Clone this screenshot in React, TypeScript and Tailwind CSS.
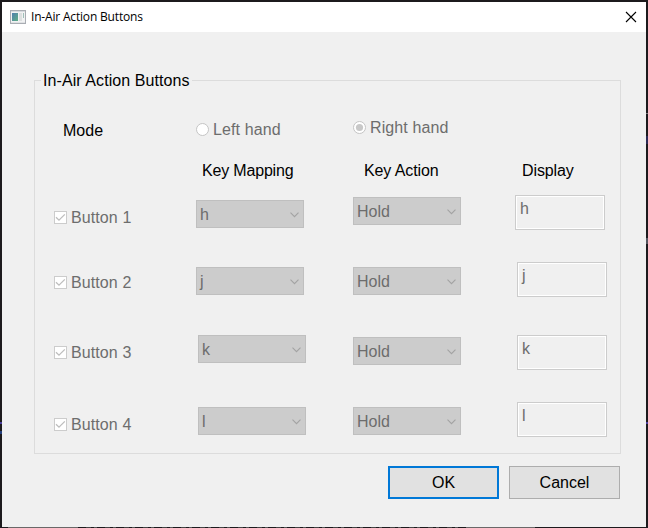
import React from "react";

type Row = {
  label: string;
  keyName: string;
  height: string;
  check: string;
  mapping: string;
  action: string;
  display: string;
};

const rows: Row[] = [
  { label: "Button 1", keyName: "h", height: "h-[67px]", check: "pt-4", mapping: "pt-[5px]", action: "pt-0.5", display: "" },
  { label: "Button 2", keyName: "j", height: "h-[73px]", check: "pt-3.5", mapping: "pt-[5px]", action: "pt-[5px]", display: "pl-0.5" },
  { label: "Button 3", keyName: "k", height: "h-[67px]", check: "pt-[11px]", mapping: "pl-0.5", action: "pt-0.5", display: "pl-0.5" },
  { label: "Button 4", keyName: "l", height: "h-[50px]", check: "pt-4", mapping: "pl-0.5 pt-[5px]", action: "pt-[5px]", display: "pl-0.5" },
];

const columns = "grid grid-cols-[161px_157px_162px_1fr] items-start";

function AppIcon() {
  return (
    <svg className="block" width="16" height="14" viewBox="0 0 16 14" shapeRendering="crispEdges">
      <defs>
        <linearGradient id="pane" x1="0" y1="0" x2="1" y2="1">
          <stop offset="0" stopColor="#4f7fae" />
          <stop offset="1" stopColor="#5fae85" />
        </linearGradient>
      </defs>
      <rect x="0.5" y="0.5" width="15" height="13" fill="#f1f2f3" stroke="#a9adb3" />
      <rect x="1" y="1" width="14" height="1" fill="#d5d9dd" />
      <rect x="2" y="3" width="6" height="8" fill="url(#pane)" />
      <rect x="9" y="3" width="3" height="8" fill="#dde0e0" />
      <rect x="13" y="3" width="1" height="5" fill="#9fc0b8" />
      <rect x="1" y="12" width="14" height="1" fill="#e0e2e4" />
    </svg>
  );
}

function Select({ value }: { value: string }) {
  return (
    <div className="flex h-7 w-[108px] items-center justify-between border border-[#bfbfbf] bg-[#cccccc] pr-1 pl-[3px] text-[#6d6d6d]">
      <span className="pt-0.5 leading-[18px]">{value}</span>
      <svg className="mt-0.5" width="9" height="6" viewBox="0 0 9 6" fill="none" stroke="#a3a3a3" strokeWidth="1.1">
        <path d="M0.5 0.7 4.5 4.7 8.5 0.7" />
      </svg>
    </div>
  );
}

function Check({ label }: { label: string }) {
  return (
    <div className="flex h-[13px] items-center gap-1 pl-[19px] tracking-[0.1px] text-[#6d6d6d]">
      <svg width="13" height="13" viewBox="0 0 13 13" fill="none">
        <rect x="0.5" y="0.5" width="12" height="12" fill="#fff" stroke="#cccccc" />
        <path d="M2 6.3 5 9.2 10.8 3.4" stroke="#bdbdbd" strokeWidth="1.3" />
      </svg>
      <span className="leading-[18px]">{label}</span>
    </div>
  );
}

function Radio({ label, selected = false }: { label: string; selected?: boolean }) {
  return (
    <div className="flex h-[13px] items-center gap-1 tracking-[0.1px] text-[#6d6d6d]">
      <svg width="13" height="13" viewBox="0 0 13 13">
        <circle cx="6.5" cy="6.5" r="6" fill="#fff" stroke="#c4c4c4" />
        {selected && <circle cx="6.5" cy="6.5" r="3.6" fill="#c8c8c8" />}
      </svg>
      <span className="leading-[18px]">{label}</span>
    </div>
  );
}

export default function App() {
  return (
    <div className="h-[528px] w-[648px] overflow-hidden bg-[#1c1a1d] pt-0.5 font-['Liberation_Sans',Arial,sans-serif] text-base text-black">
      <div className="flex">
        <div className="flex w-0.5 flex-col pt-[420px]">
          <div className="h-0.5 bg-[#4b3f9c]" />
          <div className="mt-[7px] h-[3px] bg-[#26407c]" />
        </div>
        <div className="flex h-[525px] w-[644px] flex-col bg-[#f0f0f0]">
          <header className="flex h-[30px] shrink-0 items-center bg-white pr-[9px] pl-2">
            <AppIcon />
            <h1 className="ml-[5px] flex-1 font-['Open_Sans','Noto_Sans',sans-serif] text-[12px] tracking-[-0.18px] whitespace-nowrap">
              In-Air Action Buttons
            </h1>
            <svg className="-mt-px" width="12" height="12" viewBox="0 0 12 12" stroke="#000" strokeWidth="1.1">
              <path d="M1 1 11 11M11 1 1 11" />
            </svg>
          </header>

          <fieldset className="mt-[39px] ml-8 h-[383px] w-[587px] min-w-0 border border-[#dcdcdc]">
            <legend className="ml-1.5 h-[18px] px-0.5 leading-[20px] tracking-[0.08px] whitespace-nowrap">
              In-Air Action Buttons
            </legend>
            <div className={`${columns} h-[39px] pt-[31px]`}>
              <div className="pt-0.5 pl-7 leading-[18px]">Mode</div>
              <div className="pt-[3px]">
                <Radio label="Left hand" />
              </div>
              <div className="pt-px">
                <Radio label="Right hand" selected />
              </div>
            </div>
            <div className={`${columns} h-[67px] pt-[34px] leading-[18px] whitespace-nowrap`}>
              <span />
              <span className="pl-1.5 tracking-[-0.18px]">Key Mapping</span>
              <span className="pl-[11px] tracking-[-0.1px]">Key Action</span>
              <span className="pl-[7px] tracking-[-0.1px]">Display</span>
            </div>
            {rows.map((row) => (
              <div key={row.label} className={`${columns} ${row.height}`}>
                <div className={row.check}>
                  <Check label={row.label} />
                </div>
                <div className={row.mapping}>
                  <Select value={row.keyName} />
                </div>
                <div className={row.action}>
                  <Select value="Hold" />
                </div>
                <div className={row.display}>
                  <div className="h-[35px] w-[90px] border border-[#cccccc] bg-white p-px">
                    <div className="h-full bg-[#f0f0f0] pt-[3px] pl-[3px] leading-[18px] text-[#6d6d6d]">{row.keyName}</div>
                  </div>
                </div>
              </div>
            ))}
          </fieldset>

          <footer className="mt-3 flex gap-2.5 pl-[386px]">
            <button className="h-[33px] w-[111px] border-2 border-[#0078d7] bg-[#e1e1e1]">OK</button>
            <button className="h-[33px] w-[111px] border border-[#adadad] bg-[#e1e1e1]">Cancel</button>
          </footer>
        </div>
        <div className="flex w-0.5 flex-col pt-[111px]">
          <div className="h-px bg-[#77757a]" />
          <div className="mt-[22px] h-[8px] bg-[#2c2a55]" />
          <div className="mt-[94px] h-1.5 bg-[#55555f]" />
          <div className="mt-[178px] h-0.5 bg-[#4b3f9c]" />
        </div>
      </div>
      <div className="flex h-px items-stretch">
        <div className="ml-2 w-[70px] bg-[#6a6868]" />
        <div className="ml-2 w-[380px] bg-[repeating-linear-gradient(90deg,#444_0_5px,#1c1a1d_5px_8px,#555_8px_11px,#1c1a1d_11px_19px)]" />
        <div className="w-[69px] bg-[#6a6868]" />
      </div>
    </div>
  );
}
